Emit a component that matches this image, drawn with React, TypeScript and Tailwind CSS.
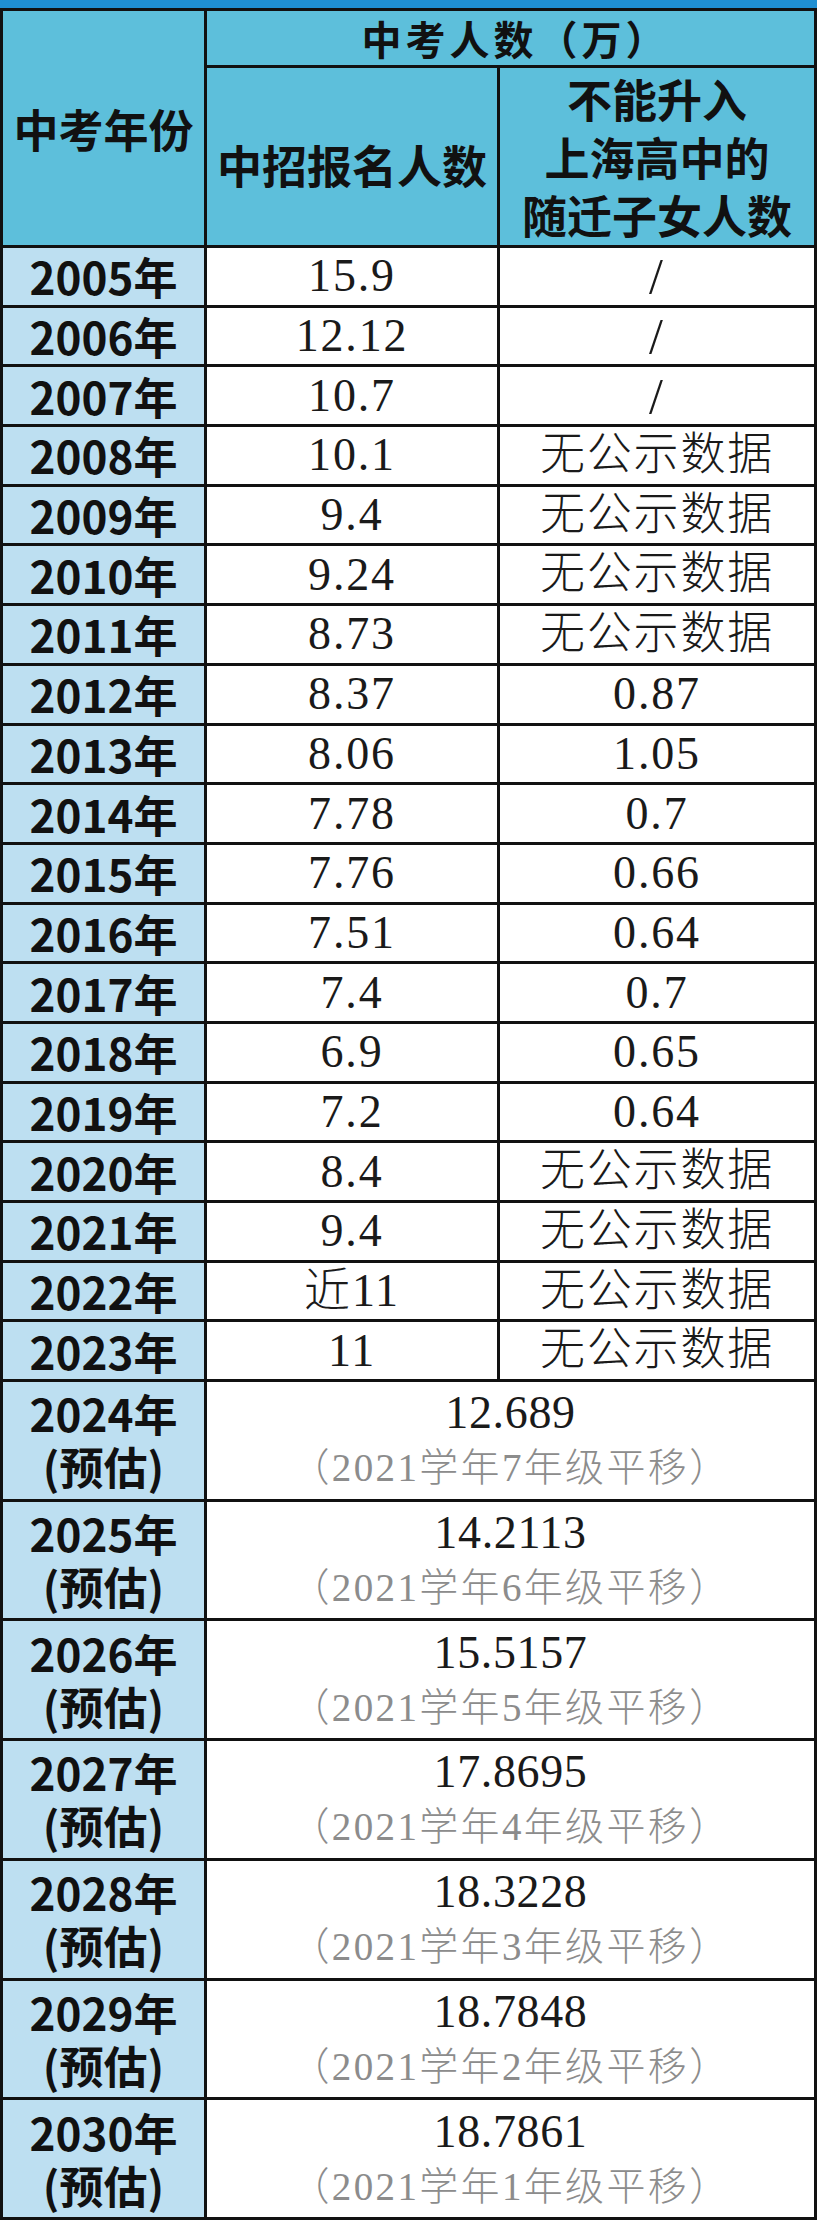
const actual: [string, string, string][] = [
  ["2005年", "15.9", "/"],
  ["2006年", "12.12", "/"],
  ["2007年", "10.7", "/"],
  ["2008年", "10.1", "无公示数据"],
  ["2009年", "9.4", "无公示数据"],
  ["2010年", "9.24", "无公示数据"],
  ["2011年", "8.73", "无公示数据"],
  ["2012年", "8.37", "0.87"],
  ["2013年", "8.06", "1.05"],
  ["2014年", "7.78", "0.7"],
  ["2015年", "7.76", "0.66"],
  ["2016年", "7.51", "0.64"],
  ["2017年", "7.4", "0.7"],
  ["2018年", "6.9", "0.65"],
  ["2019年", "7.2", "0.64"],
  ["2020年", "8.4", "无公示数据"],
  ["2021年", "9.4", "无公示数据"],
  ["2022年", "近11", "无公示数据"],
  ["2023年", "11", "无公示数据"],
];

const forecast: [string, string, number][] = [
  ["2024年", "12.689", 7],
  ["2025年", "14.2113", 6],
  ["2026年", "15.5157", 5],
  ["2027年", "17.8695", 4],
  ["2028年", "18.3228", 3],
  ["2029年", "18.7848", 2],
  ["2030年", "18.7861", 1],
];

const bold = "font-['Noto_Sans_CJK_SC',sans-serif] font-bold text-[#111]";
const serif =
  "font-['Liberation_Serif','Noto_Sans_CJK_SC',serif] font-light text-[#1a1a1a] tracking-[0.04em]";
const cell = "border-r-[3px] border-b-[3px] border-[#111] flex items-center justify-center";

export default function App() {
  return (
    <div className="w-[817px] bg-white">
      <div className="h-[8px] bg-[#1f8fd2]" />
      <div className="border-t-[3px] border-l-[3px] border-[#111]">
        {/* header */}
        <div className="flex bg-[#5dbfdb]">
          <div className={`${cell} w-[204px] h-[237px] ${bold} text-[45px] leading-none`}>
            中考年份
          </div>
          <div className="flex flex-col">
            <div
              className={`${cell} w-[610px] h-[57px] ${bold} text-[40px] leading-none tracking-[0.1em] pl-[10px]`}
            >
              中考人数（万）
            </div>
            <div className="flex">
              <div className={`${cell} w-[293px] h-[180px] ${bold} text-[45px] leading-none pt-[16px]`}>
                中招报名人数
              </div>
              <div
                className={`${cell} w-[317px] h-[180px] ${bold} text-[45px] leading-[58px] flex-col`}
              >
                <span>不能升入</span>
                <span>上海高中的</span>
                <span>随迁子女人数</span>
              </div>
            </div>
          </div>
        </div>

        {/* reported years */}
        {actual.map(([year, total, migrant]) => (
          <div key={year} className="flex h-[59.7px]">
            <div className={`${cell} w-[204px] bg-[#bddff1] ${bold} text-[44px] leading-none`}>
              {year}
            </div>
            <div className={`${cell} w-[293px] ${serif} text-[46px] leading-none`}>{total}</div>
            <div
              className={`${cell} w-[317px] ${serif} leading-none ${
                migrant === "/" ? "text-[50px] font-normal" : migrant.includes("无") ? "text-[45px]" : "text-[46px]"
              }`}
            >
              {migrant}
            </div>
          </div>
        ))}

        {/* forecast years */}
        {forecast.map(([year, total, grade]) => (
          <div key={year} className="flex h-[119.7px]">
            <div
              className={`${cell} w-[204px] bg-[#bddff1] ${bold} text-[44px] leading-[53px] flex-col`}
            >
              <span className="h-[53px]">{year}</span>
              <span className="h-[53px]">(预估)</span>
            </div>
            <div className={`${cell} w-[610px] flex-col ${serif} leading-[55px]`}>
              <span className="text-[46px]">{total}</span>
              <span className="text-[39px] text-[#8c8c8c] tracking-[0.06em]">
                （2021学年{grade}年级平移）
              </span>
            </div>
          </div>
        ))}
      </div>
    </div>
  );
}
